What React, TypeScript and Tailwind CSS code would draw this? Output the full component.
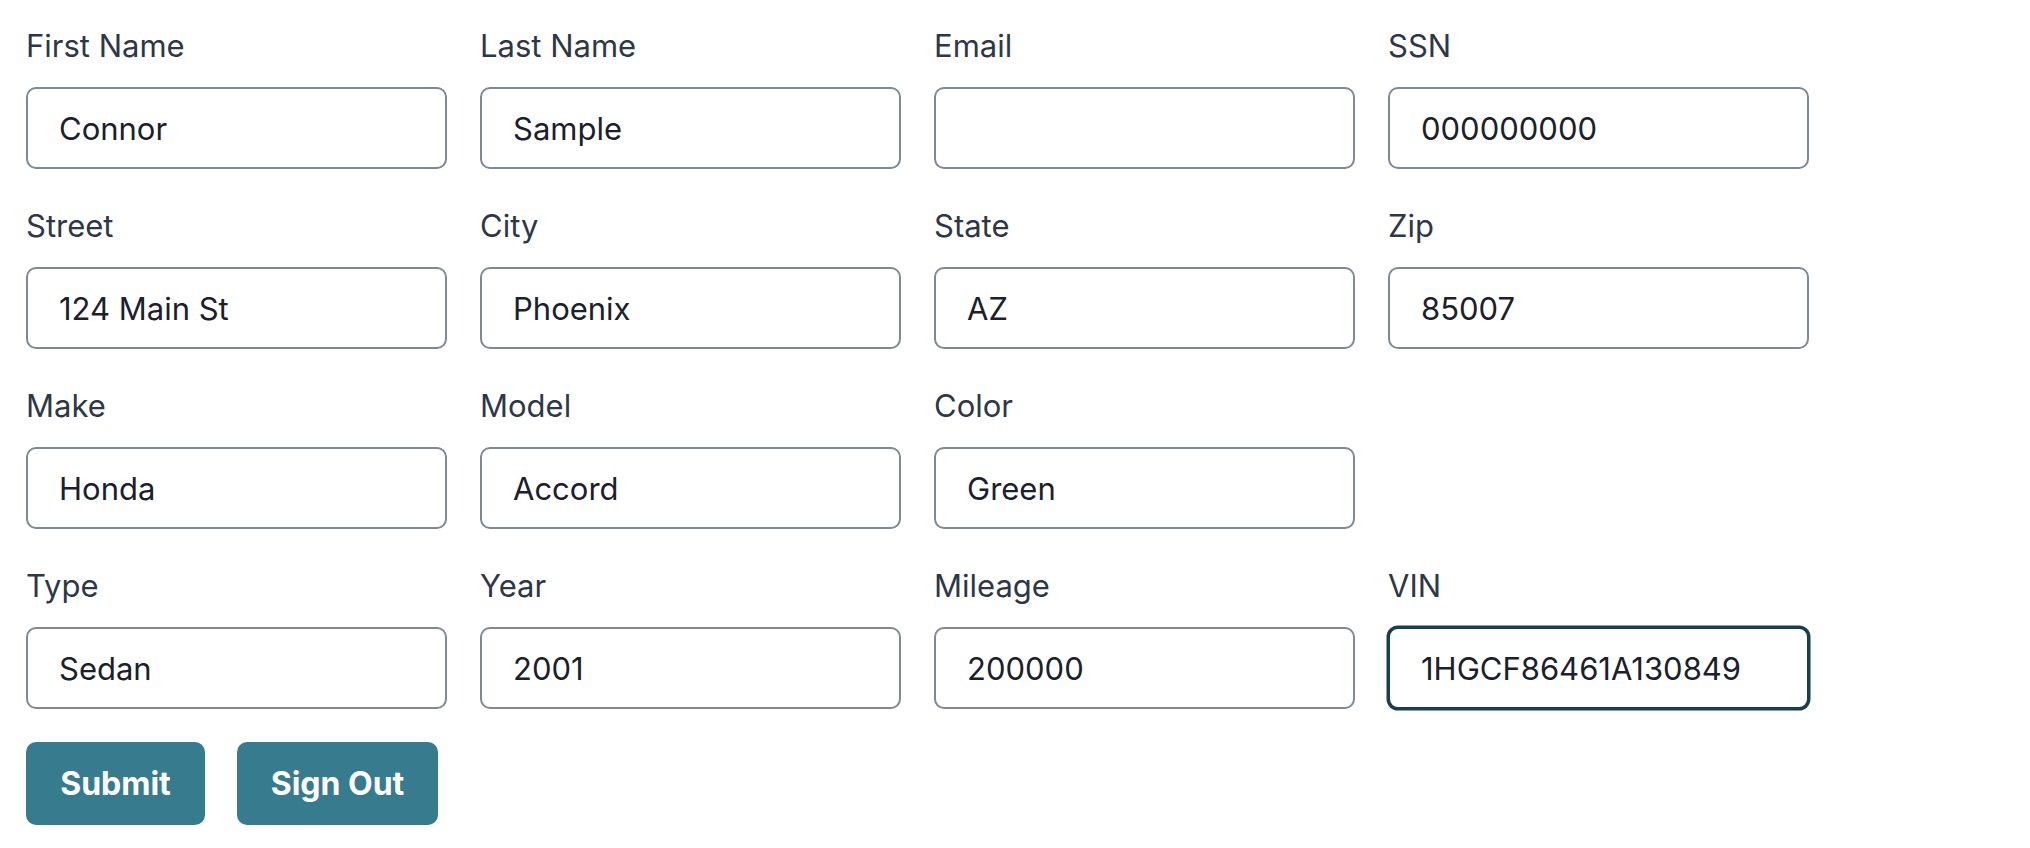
import { useState } from "react";

interface Field {
  label: string;
  value: string;
}

const rows: (Field | null)[][] = [
  [
    { label: "First Name", value: "Connor" },
    { label: "Last Name", value: "Sample" },
    { label: "Email", value: "" },
    { label: "SSN", value: "000000000" },
  ],
  [
    { label: "Street", value: "124 Main St" },
    { label: "City", value: "Phoenix" },
    { label: "State", value: "AZ" },
    { label: "Zip", value: "85007" },
  ],
  [
    { label: "Make", value: "Honda" },
    { label: "Model", value: "Accord" },
    { label: "Color", value: "Green" },
    null,
  ],
  [
    { label: "Type", value: "Sedan" },
    { label: "Year", value: "2001" },
    { label: "Mileage", value: "200000" },
    { label: "VIN", value: "1HGCF86461A130849" },
  ],
];

function FormField({ label, value, focused }: Field & { focused?: boolean }) {
  const [text, setText] = useState(value);
  const id = label.toLowerCase().replace(/\s+/g, "-");

  return (
    <div className="flex flex-col">
      <label htmlFor={id} className="text-[31px] leading-[48px] text-[#2d3748] mb-[17px]">
        {label}
      </label>
      <input
        id={id}
        type="text"
        value={text}
        onChange={(e) => setText(e.target.value)}
        className={
          focused
            ? "h-[82px] w-full rounded-[10px] border-2 border-[#1a3f4c] shadow-[0_0_0_1.5px_#1a3f4c] bg-white px-[31px] text-[31px] text-[#1a202c] outline-none"
            : "h-[82px] w-full rounded-[10px] border-2 border-[#7f8994] bg-white px-[31px] text-[31px] text-[#1a202c] outline-none"
        }
      />
    </div>
  );
}

export default function App() {
  return (
    <div
      className="min-h-[848px] bg-white pl-[26px] pt-[22px]"
      style={{ fontFamily: "Inter, 'Noto Sans', sans-serif" }}
    >
      <form onSubmit={(e) => e.preventDefault()} noValidate>
        <div className="grid grid-cols-[repeat(4,421px)] gap-x-[33px] gap-y-[33px]">
          {rows.flatMap((row, r) =>
            row.map((field, c) =>
              field ? (
                <FormField key={`${r}-${c}`} {...field} focused={field.label === "VIN"} />
              ) : (
                <div key={`${r}-${c}`} />
              )
            )
          )}
        </div>

        <div className="flex gap-[32px] mt-[33px]">
          <button
            type="submit"
            className="h-[83px] w-[179px] rounded-[10px] bg-[#377b8f] text-[32px] font-bold text-white"
          >
            Submit
          </button>
          <button
            type="button"
            className="h-[83px] w-[201px] rounded-[10px] bg-[#377b8f] text-[32px] font-bold text-white"
          >
            Sign Out
          </button>
        </div>
      </form>
    </div>
  );
}
